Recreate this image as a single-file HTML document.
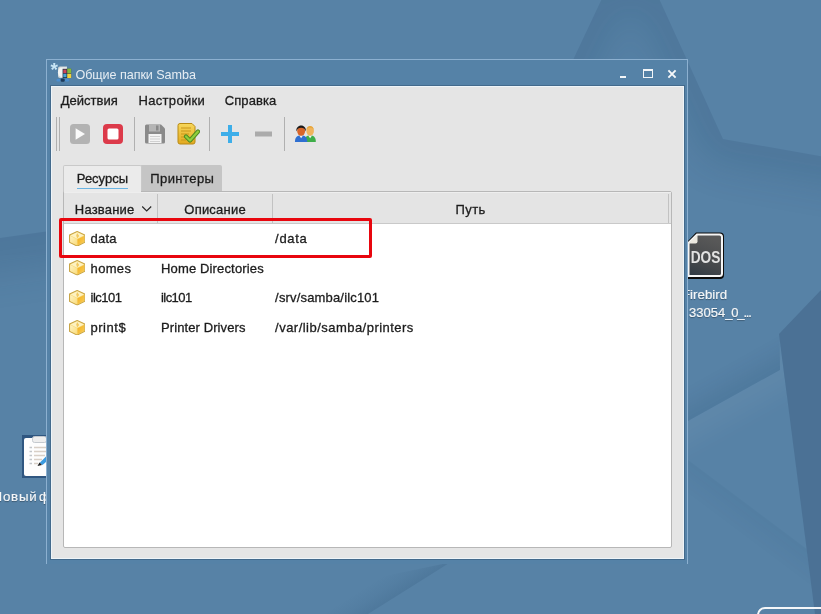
<!DOCTYPE html>
<html lang="ru">
<head>
<meta charset="utf-8">
<title>Общие папки Samba</title>
<style>
html,body{margin:0;padding:0;}
body{width:821px;height:614px;overflow:hidden;position:relative;background:#5782a6;
  font-family:"Liberation Sans","DejaVu Sans",sans-serif;font-size:13px;color:#1b1b1b;}
.abs{position:absolute;}
#wall{position:absolute;left:0;top:0;width:821px;height:614px;}
.dlabel{position:absolute;color:#f4f6f8;font-size:13px;white-space:nowrap;line-height:16px;
  text-shadow:0 1px 1px rgba(0,0,0,.35);opacity:0.999;-webkit-text-stroke:0.2px currentColor;}
.tx{position:absolute;white-space:nowrap;line-height:16px;color:#1c1c1c;opacity:0.999;-webkit-text-stroke:0.3px currentColor;}
#win{position:absolute;left:46px;top:59px;width:642px;height:505px;background:#5582a7;
  box-sizing:border-box;border:1px solid #8cb0d0;border-bottom:none;}
#content{position:absolute;left:51px;top:86px;width:633px;height:473px;background:#e5e5e5;
  box-sizing:border-box;border:1px solid #eef4f8;box-shadow:0 0 0 1px rgba(40,68,98,0.38);}
.tsep{position:absolute;top:117px;width:1px;height:33.5px;background:#b0b0b0;}
.tab{position:absolute;box-sizing:border-box;}
#pane{position:absolute;left:63px;top:191px;width:609px;height:357px;box-sizing:border-box;
  border:1px solid #b7b7b7;border-radius:2px;background:#fff;overflow:hidden;}
#hdr{position:absolute;left:0;top:0;width:607px;height:32px;background:#e4e4e4;
  border-bottom:1px solid #c9c9c9;box-sizing:border-box;box-shadow:inset 0 1px 0 #eeeeee;}
.hsep{position:absolute;top:2px;width:1px;height:29px;background:#c2c2c2;}
.ico{position:absolute;width:16.4px;height:15.6px;}
#redbox{position:absolute;left:59px;top:218px;width:313px;height:40px;box-sizing:border-box;
  border:3px solid #e8060e;border-radius:2px;}
</style>
</head>
<body>
<svg id="wall" viewBox="0 0 821 614">
  <defs>
    <filter id="bl" filterUnits="userSpaceOnUse" x="-200" y="-200" width="1300" height="1100"><feGaussianBlur stdDeviation="11"/></filter>
    <filter id="bl2" filterUnits="userSpaceOnUse" x="-200" y="-200" width="1300" height="1100"><feGaussianBlur stdDeviation="14"/></filter>
    <filter id="bl3" filterUnits="userSpaceOnUse" x="-200" y="-200" width="1300" height="1100"><feGaussianBlur stdDeviation="19"/></filter>
    <clipPath id="cs"><polygon points="631,-63 723,139 900,170 900,320 500,320 540,130"/></clipPath>
    <clipPath id="cd"><polygon points="688,421 780,370 780,280 688,280"/></clipPath>
    <clipPath id="ce"><polygon points="688,460 812,553 812,614 688,614"/></clipPath>
    <clipPath id="cf"><polygon points="0,238 46,231.5 46,400 0,400"/></clipPath>
    <clipPath id="cg"><polygon points="688,421 780,370 779,334 800,500 688,500"/></clipPath>
  </defs>
  <rect width="821" height="614" fill="#5782a6"/>
  <g clip-path="url(#cs)" opacity="0.15">
    <polyline points="540,130 631,-63 723,139 900,170" fill="none" stroke="#15385a" stroke-width="50" filter="url(#bl3)"/>
  </g>
  <g clip-path="url(#cd)" opacity="0.15">
    <polyline points="640,448 830,342" fill="none" stroke="#15385a" stroke-width="20" filter="url(#bl)"/>
  </g>
  <g clip-path="url(#cg)" opacity="0.05">
    <polyline points="640,448 830,342" fill="none" stroke="#ffffff" stroke-width="40" filter="url(#bl2)"/>
  </g>
  <g clip-path="url(#ce)" opacity="0.06">
    <polyline points="640,424 860,589" fill="none" stroke="#15385a" stroke-width="20" filter="url(#bl)"/>
  </g>
  <g clip-path="url(#cf)" opacity="0.13">
    <polyline points="-60,247 110,222" fill="none" stroke="#15385a" stroke-width="70" filter="url(#bl3)"/>
  </g>
  <linearGradient id="gw" gradientUnits="userSpaceOnUse" x1="409" y1="588" x2="396" y2="567.5">
    <stop offset="0" stop-color="#15385a" stop-opacity="0.13"/><stop offset="0.5" stop-color="#15385a" stop-opacity="0.05"/><stop offset="1" stop-color="#15385a" stop-opacity="0"/>
  </linearGradient>
  <polygon points="450,562.5 368,614 200,614" fill="url(#gw)"/>
  <polygon points="779,334 821,290 821,614 815,614" fill="#4b7195"/>
</svg>

<!-- desktop icons -->
<div class="abs" id="dos" style="left:686px;top:232px;width:40px;height:48px;opacity:0.999;">
  <svg width="40" height="48" viewBox="0 0 40 48">
    <defs><linearGradient id="dg" x1="0.3" y1="0" x2="0" y2="1"><stop offset="0" stop-color="#585858"/><stop offset="0.6" stop-color="#45484b"/><stop offset="1" stop-color="#2f3943"/></linearGradient></defs>
    <path d="M10 0.5 H34 a4 4 0 0 1 4 4 V43 a4 4 0 0 1 -4 4 H2 V9 Z" fill="#0c0c0c"/>
    <path d="M11 2.5 H33.5 a2.5 2.5 0 0 1 2.5 2.5 V41.5 a2.5 2.5 0 0 1 -2.5 2.5 H2.5 V11 Z" fill="url(#dg)" stroke="#f6f6f6" stroke-width="2"/>
    <path d="M2 11.5 L11.5 2.5 V9.5 a2 2 0 0 1 -2 2 Z" fill="#ece9e0"/>
    <text transform="translate(19.5 30.5) scale(0.83 1)" font-family="Liberation Sans, sans-serif" font-weight="bold" font-size="16.5" fill="#e2e2e2" text-anchor="middle">DOS</text>
  </svg>
</div>
<div class="dlabel" style="left:682px;top:286.5px;font-size:13.3px;">Firebird</div>
<div class="dlabel" style="left:689px;top:305px;">33054<span style="letter-spacing:-1.15px">_0_...</span></div>

<div class="abs" style="left:22px;top:435px;width:40px;height:43px;">
  <svg width="40" height="43" viewBox="0 0 40 43">
    <rect x="0" y="0" width="40" height="43" fill="#2f5680"/>
    <rect x="2" y="3" width="36" height="38" rx="2" fill="#fdfdfd"/>
    <rect x="10.5" y="1.5" width="14" height="6" rx="2" fill="#eeeeee" stroke="#c4c9ce"/>
    <g stroke="#c2c6ca" stroke-width="1.4"><path d="M7.5 12.5h2.5M7.5 16.5h2.5M7.5 20.5h2.5M7.5 24.5h2.5M7.5 28.5h2.5"/></g>
    <g stroke="#d8cfc6" stroke-width="1.4"><path d="M12 12.5h12M12 16.5h12M12 20.5h11M12 24.5h8M12 28.5h4"/></g>
    <path d="M17.5 28 l8 -8 l3 3 l-8 7 z" fill="#3b9be0"/>
    <path d="M15.5 31 l2 -3.5 l2.5 2.5 z" fill="#1f1f1f"/>
  </svg>
</div>
<div class="dlabel" style="left:-7.5px;top:489px;font-size:13.3px;letter-spacing:0.8px;word-spacing:-3px;">Новый ф</div>

<!-- window -->
<div id="win">
  <div class="abs" style="left:3.5px;top:0px;font-size:19px;line-height:19px;font-weight:bold;color:#c9e6f5;opacity:0.999;">*</div>
  <svg class="abs" style="left:3px;top:3px" width="26" height="22" viewBox="0 0 26 22">
    <path d="M8 5.5 a2 2 0 0 1 2 -2 H17 V15 H10 a2 2 0 0 1 -2 -2 Z" fill="#d3d8d8"/>
    <path d="M11.5 4.5 h5 v9.5 h-5 a3.5 4.7 0 0 1 0 -9.5 z" fill="#f2f4f3"/>
    <rect x="12.6" y="5.8" width="8.6" height="9.2" fill="#1f3342"/>
    <rect x="13.3" y="6.6" width="3.2" height="3.6" fill="#cf4458"/>
    <rect x="17.2" y="5.6" width="4" height="4.4" fill="#86b83e"/>
    <rect x="13.3" y="10.8" width="3.2" height="3.4" fill="#49a3d6"/>
    <rect x="17.2" y="10.6" width="4" height="4.4" fill="#f2d23c"/>
    <rect x="6.5" y="16" width="4" height="2.5" rx="1.2" fill="#4b8ed0"/>
    <rect x="10.7" y="15.5" width="4" height="3.2" rx="1.2" fill="#1d3a5a"/>
    <rect x="15" y="16" width="4" height="2.5" rx="1.2" fill="#4b8ed0"/>
  </svg>
  <div class="abs" style="left:573px;top:16px;width:6px;height:2px;background:#f2f5f8;"></div>
  <div class="abs" style="left:596px;top:9px;width:9.5px;height:9px;box-sizing:border-box;border:1px solid #f2f5f8;border-top-width:2px;"></div>
  <svg class="abs" style="left:620px;top:9px" width="10" height="10" viewBox="0 0 10 10">
    <path d="M1.4 1.4 L8.6 8.6 M8.6 1.4 L1.4 8.6" stroke="#f6f8fa" stroke-width="1.9" fill="none"/>
  </svg>
</div>
<div class="tx" style="left:75.4px;top:67px;font-size:12.6px;letter-spacing:-0.06px;color:#e6edf3;-webkit-text-stroke:0;">Общие папки Samba</div>

<div id="content"></div>

<!-- menu -->
<div class="tx" style="left:60.7px;top:93px;font-size:13px;letter-spacing:0.02px;">Действия</div>
<div class="tx" style="left:138.5px;top:93px;font-size:13px;letter-spacing:0.32px;">Настройки</div>
<div class="tx" style="left:224.8px;top:93px;font-size:13px;letter-spacing:0.07px;">Справка</div>

<!-- toolbar -->
<div class="tsep" style="left:56px;"></div>
<div class="tsep" style="left:59px;"></div>
<div class="tsep" style="left:134px;"></div>
<div class="tsep" style="left:209px;"></div>
<div class="tsep" style="left:284px;"></div>

<svg class="abs" style="left:68px;top:122px" width="24" height="24" viewBox="0 0 24 24">
  <rect x="2" y="2" width="20" height="20" rx="3.5" fill="#b3b3b3"/>
  <path d="M7.6 6.3 L17 12 L7.6 17.7 Z" fill="#fafafa"/>
</svg>
<svg class="abs" style="left:101px;top:122px" width="24" height="24" viewBox="0 0 24 24">
  <rect x="2" y="2" width="20" height="20" rx="4" fill="#dc3a4a"/>
  <rect x="6.5" y="6.5" width="11" height="11" rx="1.5" fill="#fff"/>
</svg>
<svg class="abs" style="left:143px;top:122px" width="24" height="24" viewBox="0 0 24 24">
  <path d="M2 4 a1.5 1.5 0 0 1 1.5 -1.5 H18 L22 6.5 V20 a1.5 1.5 0 0 1 -1.5 1.5 H3.5 A1.5 1.5 0 0 1 2 20 Z" fill="#8a8a8a"/>
  <rect x="6" y="2.5" width="11" height="7" fill="#b5b5b5"/>
  <rect x="13" y="3.5" width="2.5" height="5" fill="#8a8a8a"/>
  <rect x="5.5" y="12" width="13" height="9" fill="#f3f3f3"/>
  <path d="M7 14.5h10M7 17h10M7 19.5h10" stroke="#d0d0d0" stroke-width="1"/>
</svg>
<svg class="abs" style="left:176px;top:122px" width="24" height="24" viewBox="0 0 24 24">
  <defs><linearGradient id="ng" x1="0" y1="0" x2="0" y2="1"><stop offset="0" stop-color="#f7d75a"/><stop offset="1" stop-color="#e3a91f"/></linearGradient></defs>
  <path d="M2 3.5 a2 2 0 0 1 2 -2 H16 L19 4.5 V20 a2 2 0 0 1 -2 2 H4 a2 2 0 0 1 -2 -2 Z" fill="url(#ng)" stroke="#b88a14" stroke-width="1"/>
  <path d="M5 6h10M5 9h10M5 12h8M5 15h6M5 18h5" stroke="#c9971a" stroke-width="1"/>
  <path d="M10 14.5 L14 18.5 L22 9.5" stroke="#4f8a1f" stroke-width="4.2" fill="none" stroke-linejoin="round" stroke-linecap="round"/>
  <path d="M10 14.5 L14 18.5 L22 9.5" stroke="#8fcf3c" stroke-width="2.2" fill="none" stroke-linejoin="round" stroke-linecap="round"/>
</svg>
<svg class="abs" style="left:218px;top:122px" width="24" height="24" viewBox="0 0 24 24">
  <path d="M10 3 h4 v7 h7 v4 h-7 v7 h-4 v-7 h-7 v-4 h7 z" fill="#3daee9"/>
</svg>
<svg class="abs" style="left:251px;top:122px" width="24" height="24" viewBox="0 0 24 24">
  <rect x="4" y="9.5" width="17" height="5" fill="#ababab"/>
</svg>
<svg class="abs" style="left:293.5px;top:124.2px" width="22.8" height="20.9" viewBox="0 0 24 22">
  <path d="M11 19 c0 -5 2 -7 6 -7 s6 2 6 7 z" fill="#3fae49"/>
  <path d="M15 12 l2 3 l2 -3 z" fill="#f2f2f2"/>
  <ellipse cx="17" cy="7.5" rx="4" ry="4.8" fill="#f0b45c"/>
  <path d="M13 6.5 c0 -3 2 -4.5 4 -4.5 s4 1.5 4 4.5 c-1 -2 -2 -2.5 -4 -2.5 s-3 0.5 -4 2.5z" fill="#e8a63a"/>
  <path d="M1 19 c0 -5 2 -7 6.5 -7 s6.5 2 6.5 7 z" fill="#2f6fd1"/>
  <path d="M5.5 12 l2 3 l2 -3 z" fill="#f2f2f2"/>
  <ellipse cx="7.5" cy="7.5" rx="4.2" ry="5" fill="#d9662a"/>
  <path d="M2.5 8 c-0.5 -4 2 -6.5 5 -6.5 s5.5 2.5 5 6.5 c-1 -3 -2.5 -4 -5 -4 s-4 1 -5 4z" fill="#1a1a1a"/>
</svg>

<!-- tabs -->
<div class="tab" style="left:141px;top:165px;width:81px;height:27px;background:#c5c5c5;border-radius:0 2px 0 0;"></div>
<div class="tab" style="left:63px;top:165px;width:79px;height:28px;background:#ebebeb;border:1px solid #c9c9c9;border-bottom:none;border-radius:2px 2px 0 0;"></div>
<div class="abs" style="left:77px;top:188px;width:51px;height:1px;background:#6ab4e3;"></div>
<div class="tx" style="left:76.8px;top:171px;font-size:13px;letter-spacing:-0.01px;">Ресурсы</div>
<div class="tx" style="left:150.2px;top:171px;font-size:13px;letter-spacing:0.45px;">Принтеры</div>

<!-- list pane -->
<div id="pane">
  <div id="hdr">
    <svg class="abs" style="left:77px;top:13px" width="12" height="8" viewBox="0 0 12 8"><path d="M1.2 1.5 L5.7 6 L10.2 1.5" stroke="#2a2a2a" stroke-width="1.2" fill="none"/></svg>
    <div class="hsep" style="left:93px;"></div>
    <div class="hsep" style="left:208px;"></div>
    <div class="hsep" style="left:604px;"></div>
  </div>
</div>
<div class="abs" style="left:64px;top:191px;width:77px;height:1px;background:#ebebeb;"></div>
<div class="tx" style="left:74.8px;top:202px;font-size:13px;letter-spacing:0.2px;">Название</div>
<div class="tx" style="left:184.3px;top:202px;font-size:13px;letter-spacing:0.22px;">Описание</div>
<div class="tx" style="left:455.4px;top:202px;font-size:13px;letter-spacing:0.47px;">Путь</div>

<!-- rows -->
<div class="tx" style="left:90.6px;top:231px;font-size:13px;letter-spacing:0.23px;">data</div>
<div class="tx" style="left:275.1px;top:231px;font-size:13px;letter-spacing:0.69px;">/data</div>
<div class="tx" style="left:90.6px;top:261px;font-size:13px;letter-spacing:0.32px;">homes</div>
<div class="tx" style="left:161.0px;top:261px;font-size:13px;letter-spacing:0.15px;">Home Directories</div>
<div class="tx" style="left:90.5px;top:290px;font-size:13px;letter-spacing:-0.51px;">ilc101</div>
<div class="tx" style="left:161.0px;top:290px;font-size:13px;letter-spacing:-0.57px;">ilc101</div>
<div class="tx" style="left:275.1px;top:290px;font-size:13px;letter-spacing:0.17px;">/srv/samba/ilc101</div>
<div class="tx" style="left:90.5px;top:320px;font-size:13px;letter-spacing:0.53px;">print$</div>
<div class="tx" style="left:161.0px;top:320px;font-size:13px;letter-spacing:0.1px;">Printer Drivers</div>
<div class="tx" style="left:275.1px;top:320px;font-size:13px;letter-spacing:0.47px;">/var/lib/samba/printers</div>

<svg width="0" height="0" style="position:absolute">
  <defs>
    <linearGradient id="bx1" x1="0" y1="0" x2="1" y2="1"><stop offset="0" stop-color="#fef3c4"/><stop offset="1" stop-color="#f9dc7c"/></linearGradient>
    <linearGradient id="bx2" x1="0" y1="0" x2="1" y2="1"><stop offset="0" stop-color="#f3b020"/><stop offset="1" stop-color="#f9cd58"/></linearGradient>
    <symbol id="box" viewBox="0 0 16.4 15.6">
      <path d="M8.2 0.5 L15.9 4.1 V11.3 L8.2 15.1 L0.5 11.3 V4.1 Z" fill="#f8d978" stroke="#c9a648" stroke-width="1.1" stroke-linejoin="round"/>
      <path d="M8.2 1.2 L14.9 4.4 L8.2 7.7 L1.5 4.4 Z" fill="#fdf2c2"/>
      <path d="M1.2 5 L7.9 8.3 V14.3 L1.2 11 Z" fill="url(#bx1)"/>
      <path d="M8.5 8.3 L15.2 5 V11 L8.5 14.3 Z" fill="url(#bx2)"/>
      <path d="M8.2 2 L10.2 5 L8.2 7.6 L7.2 4.6 Z" fill="#f0c455" opacity="0.9"/>
    </symbol>
  </defs>
</svg>
<svg class="ico" style="left:68.6px;top:230.8px"><use href="#box"/></svg>
<svg class="ico" style="left:68.6px;top:260.2px"><use href="#box"/></svg>
<svg class="ico" style="left:68.6px;top:290px"><use href="#box"/></svg>
<svg class="ico" style="left:68.6px;top:319.8px"><use href="#box"/></svg>

<div id="redbox"></div>

<!-- bottom-right partial widget -->
<div class="abs" style="left:757px;top:607px;width:80px;height:20px;box-sizing:border-box;border:2.5px solid #f4f6f8;border-radius:8px;"></div>
</body>
</html>
